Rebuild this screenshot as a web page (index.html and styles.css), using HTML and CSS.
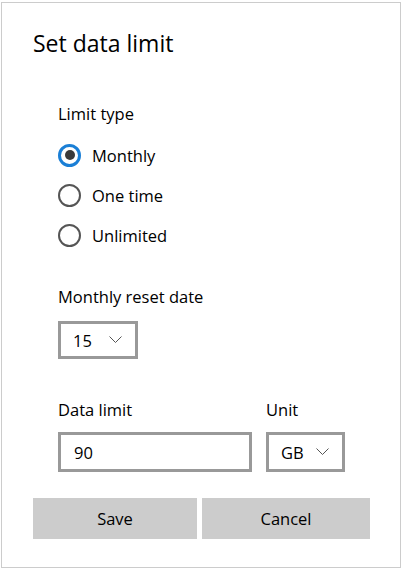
FILE: index.html
```html
<!DOCTYPE html>
<html>
<head>
<meta charset="utf-8">
<link rel="stylesheet" href="styles.css">
</head>
<body>
<div class="dialog">
  <h1 class="title">Set data limit</h1>
  <div class="content">
    <div class="label limit-type">Limit type</div>
    <div class="radios">
      <div class="radio-row"><span class="radio checked"><span class="dot"></span></span><span class="radio-label">Monthly</span></div>
      <div class="radio-row"><span class="radio"></span><span class="radio-label">One time</span></div>
      <div class="radio-row"><span class="radio"></span><span class="radio-label">Unlimited</span></div>
    </div>
    <div class="label reset-label">Monthly reset date</div>
    <div class="select reset-select"><span class="value">15</span><svg class="chev" width="13" height="8" viewBox="0 0 13 8"><polyline points="0.5,0.5 6.5,6.5 12.5,0.5" fill="none" stroke="#555" stroke-width="1"/></svg></div>
    <div class="limit-row">
      <div class="field-col">
        <div class="label">Data limit</div>
        <div class="textbox"><span class="value">90</span></div>
      </div>
      <div class="unit-col">
        <div class="label">Unit</div>
        <div class="select unit-select"><span class="value">GB</span><svg class="chev" width="13" height="8" viewBox="0 0 13 8"><polyline points="0.5,0.5 6.5,6.5 12.5,0.5" fill="none" stroke="#555" stroke-width="1"/></svg></div>
      </div>
    </div>
  </div>
  <div class="buttons">
    <button class="btn">Save</button>
    <button class="btn">Cancel</button>
  </div>
</div>
</body>
</html>
```
FILE: styles.css
```css
html, body {
  margin: 0;
  padding: 0;
  background: #fff;
}
body {
  font-family: "Open Sans", "Noto Sans", "Liberation Sans", sans-serif;
  color: #000;
}
.dialog {
  margin: 2px 0 0 1px;
  width: 400px;
  height: 566px;
  box-sizing: border-box;
  border: 1px solid #cccccc;
  padding: 24px 30px 0 31px;
}
.title {
  margin: 0;
  font-size: 23px;
  font-weight: 400;
  line-height: 32px;
}
.content {
  padding-left: 25px;
}
.label {
  font-size: 16.5px;
  line-height: 20px;
}
.limit-type {
  margin-top: 45px;
}
.radios {
  margin-top: 20px;
  display: flex;
  flex-direction: column;
  gap: 18px;
}
.radio-row {
  display: flex;
  align-items: center;
  height: 22px;
}
.radio {
  width: 23px;
  height: 23px;
  box-sizing: border-box;
  border: 2.5px solid #555;
  border-radius: 50%;
  display: flex;
  align-items: center;
  justify-content: center;
}
.radio.checked {
  border-color: #1a7fd6;
  border-width: 3px;
}
.dot {
  width: 10px;
  height: 10px;
  border-radius: 50%;
  background: #3a3a3a;
}
.radio-label {
  font-size: 16.5px;
  margin-left: 11px;
}
.reset-label {
  margin-top: 41px;
}
.select {
  box-sizing: border-box;
  border: 3px solid #999;
  display: flex;
  align-items: center;
  justify-content: space-between;
  padding: 0 13px 0 12px;
  font-size: 16.5px;
}
.reset-select {
  margin-top: 14px;
  width: 80px;
  height: 38px;
}
.limit-row {
  margin-top: 41px;
  display: flex;
  gap: 14px;
}
.field-col .textbox {
  width: 194px;
  height: 40px;
  box-sizing: border-box;
  border: 3px solid #999;
  display: flex;
  align-items: center;
  padding-left: 13px;
  font-size: 16.5px;
  margin-top: 12px;
}
.unit-select {
  margin-top: 12px;
  width: 79px;
  height: 40px;
}
.buttons {
  margin-top: 26px;
  display: flex;
  gap: 5px;
}
.btn {
  flex: 1 1 0;
  height: 41px;
  border: none;
  background: #cccccc;
  font-family: inherit;
  font-size: 16.5px;
  color: #000;
  padding: 0;
}
.btn:first-child {
  flex: 0 0 164px;
}
```
